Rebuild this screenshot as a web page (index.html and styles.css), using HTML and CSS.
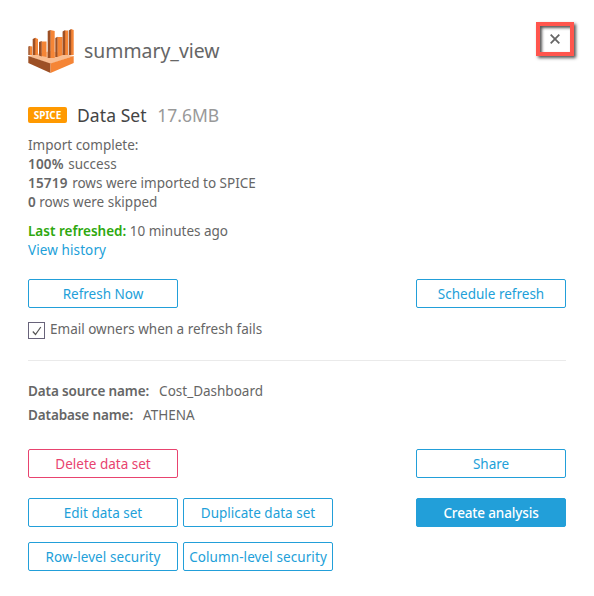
FILE: index.html
```html
<!DOCTYPE html>
<html lang="en">
<head>
<meta charset="utf-8">
<title>summary_view</title>
<link rel="stylesheet" href="styles.css">
</head>
<body>
<main class="dialog">
  <header class="header">
    <svg class="logo" viewBox="0 0 46 47" width="46" height="47">
      <path fill="#f9bd91" d="M0.300 29L22.500 24L45.700 29L22.500 37Z"/>
      <path fill="#f58536" d="M1.500 19L4.300 19.600V28H1.500ZM7 10.700L10 12V28H7ZM13.500 14.500H18.500V30L13.500 29ZM22.300 3L26.700 4V31H22.300ZM29.300 10H34.500V28L29.300 30ZM37 3.500H40V28H37ZM43 2L45.700 3V28H43Z"/>
      <path fill="#9d5025" d="M0.300 19.600L1.800 19V28H0.300ZM4.700 12L7.300 10.700V28H4.700ZM11 15L13.700 14V29.500L11 28.500ZM19.700 4L22.500 3V31H19.700ZM27.300 11L29.500 9.700V30H27.300ZM34.600 4.500L37.200 3V28H34.600ZM40.700 3.500L43.200 2V28H40.700Z"/>
      <path fill="#9d5025" d="M0.300 29L22.500 36.500V46L0.300 36Z"/>
      <path fill="#f58536" d="M22.500 36.500L45.700 29V36L22.500 46Z"/>
    </svg>
    <h1 class="title">summary_view</h1>
    <button class="close" aria-label="Close"><svg viewBox="0 0 10 10" width="10" height="10"><path d="M0.700 0.700L9.300 9.300M9.300 0.700L0.700 9.300"/></svg></button>
  </header>

  <section class="kind">
    <span class="badge">SPICE</span><span class="kind-name">Data Set</span><span class="size">17.6MB</span>
  </section>

  <section class="lines">
    <div>Import complete:</div>
    <div><b class="number">100%</b> success</div>
    <div><b class="number">15719</b> rows were imported to SPICE</div>
    <div><b>0</b> rows were skipped</div>
  </section>
  <section class="lines refreshed">
    <div><b class="green">Last refreshed:</b> 10 minutes ago</div>
    <div><a class="link">View history</a></div>
  </section>

  <div class="row refresh-row">
    <button class="btn">Refresh Now</button>
    <button class="btn">Schedule refresh</button>
  </div>
  <label class="check"><span class="box"><svg viewBox="0 0 10 10" width="10" height="10"><path d="M0.800 5.500L3.500 8.500L8.800 1"/></svg></span><span class="check-text">Email owners when a refresh fails</span></label>

  <hr class="divider">

  <section class="details">
    <div><b>Data source name:</b><span>Cost_Dashboard</span></div>
    <div><b>Database name:</b><span>ATHENA</span></div>
  </section>

  <div class="row actions">
    <button class="btn danger">Delete data set</button>
    <button class="btn">Share</button>
  </div>
  <div class="row actions edit">
    <div class="pair"><button class="btn">Edit data set</button><button class="btn">Duplicate data set</button></div>
    <button class="btn primary">Create analysis</button>
  </div>
  <div class="pair security"><button class="btn wide-text">Row-level security</button><button class="btn wide-text">Column-level security</button></div>
</main>
</body>
</html>
```

FILE: styles.css
```css
* { box-sizing: border-box; }
body { margin: 0; background: #fff; color: #666; font: 13.5px/19px "Noto Sans", sans-serif; }
.dialog { width: 594px; height: 596px; padding: 22px 28px 0; }
button { font: inherit; cursor: pointer; }
b { font-weight: 600; }
.header { display: flex; height: 56px; }
.logo { margin-top: 5px; flex: none; }
.title { margin: 14px 0 0 10px; font-size: 19.400px; line-height: 30px; font-weight: 400; }
.close { margin: 0 -8px 0 auto; width: 38px; height: 34px; padding: 0; border: 4px solid #ff554d; background: #fff; box-shadow: 2px 2px 3px #555, inset 2px 2px 3px #555; display: flex; align-items: center; justify-content: center; }
.close path { fill: none; stroke: #666; stroke-width: 1.800; }
.kind { display: flex; align-items: center; height: 30px; margin-top: 22px; font-size: 17.500px; }
.badge { width: 39px; height: 16px; border-radius: 2px; background: #ff9900; color: #fff; font-size: 10px; line-height: 16px; font-weight: 700; text-align: center; }
.kind-name { margin-left: 10px; color: #444; letter-spacing: 0.080px; }
.size { margin-left: 10.500px; color: #999; }
.lines { margin-top: 6px; }
.number { letter-spacing: 0.200px; margin-right: 1px; }
.lines.refreshed { margin-top: 10px; }
.green { color: #2ea80e; }
.link { color: #229fd9; letter-spacing: 0.100px; }
.row { display: flex; justify-content: space-between; }
.refresh-row { margin-top: 19px; }
.btn { width: 150px; height: 29px; padding: 1px 0 0; border: 1px solid #229fd9; border-radius: 2px; background: #fff; color: #229fd9; line-height: 27px; text-align: center; white-space: nowrap; }
.wide-text { letter-spacing: 0.090px; }
.danger { border-color: #e8436f; color: #e8436f; }
.primary { background: #229fd9; color: #fff; font-weight: 500; letter-spacing: -0.150px; }
.check { display: flex; height: 17px; margin-top: 14px; }
.box { width: 17px; height: 17px; border: 1px solid #68637a; display: flex; align-items: center; justify-content: center; }
.box path { fill: none; stroke: #555; stroke-width: 1.200; }
.check-text { margin: -2px 0 0 5px; }
.divider { height: 1px; margin: 21px 0 0; border: 0; background: #eaeaea; }
.details { margin-top: 18px; line-height: 24px; }
.details b { letter-spacing: -0.120px; }
.details span { margin-left: 10px; }
.actions { margin-top: 22px; }
.actions.edit { margin-top: 20px; }
.pair { display: flex; gap: 5px; }
.security { margin-top: 15px; }
```
